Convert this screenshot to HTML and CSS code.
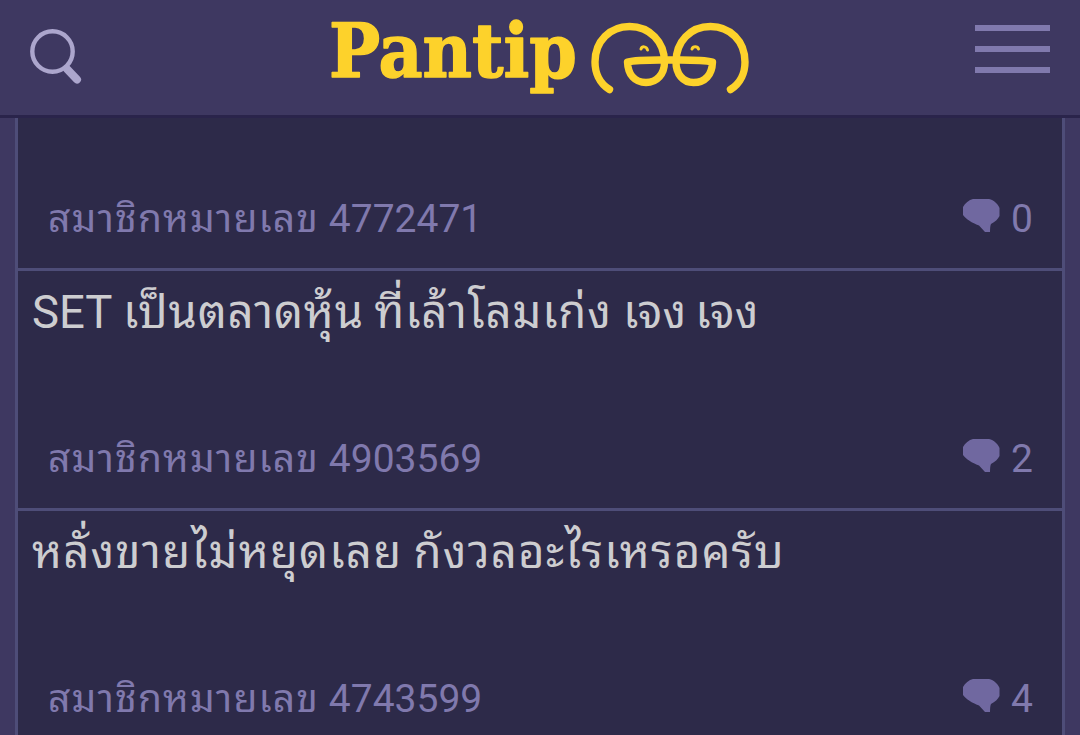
FILE: index.html
```html
<!DOCTYPE html>
<html lang="th">

<head>
    <meta charset="UTF-8">
    <title>Pantip</title>
    <link rel="stylesheet" href="styles.css">
</head>

<body>
    <header class="header">
        <a href="#" class="search">
            <svg width="52" height="56" viewBox="30 28 52 56">
                <circle cx="52.5" cy="51.5" r="20.2" fill="none" stroke="#aca6cd" stroke-width="4.4"/>
                <path d="M67 69L77 79.500" stroke="#aca6cd" stroke-width="8" stroke-linecap="round"/>
            </svg>
        </a>
        <a href="#" class="logo">
            <svg width="422" height="86" viewBox="329 15 422 86">
                <text class="logoText" x="329" y="76.500" textLength="248" lengthAdjust="spacingAndGlyphs">Pantip</text>
                <g fill="none" stroke="#fdd22b" stroke-width="7.4" stroke-linecap="round" stroke-linejoin="round">
                    <path d="M609.5 89.5C599 83 595 72 595 62C595 41 610 26.500 629.500 26.500C650 26.500 664.500 42 664.500 62C664.500 74 657 82.500 646 82.500C635 82.500 628 75 627.500 62C638 59.500 650 60 670 60C690 60 702 59.500 712.500 62C712 75 705 82.500 693.500 82.500C683 82.500 676 74 676 62C676 42 690 26.500 710.500 26.500C730 26.500 745 41 745 62C745 72 741 83 730.500 89.500"/>
                    <path d="M641 49C642 46 646.500 46 647.500 50M692 49C693 46 697.500 46 698.500 49" stroke-width="3"/>
                </g>
            </svg>
        </a>
        <a href="#" class="menu">
            <span></span>
            <span></span>
            <span></span>
        </a>
    </header>
    <div class="wrap">
        <div class="topic">
            <div class="info">
                <span><span class="member">สมาชิกหมายเลข</span> 4772471</span>
                <span class="comment">
                    <svg width="37" height="34" viewBox="0 0 37 34"><path d="M10 0H26C31 1 35 5 36.500 9V17C35 20 32 23 28 25Q27 27 27 33H22L16 26.500C9 24 3 20 0 16V8C2 4 6 1 10 0Z" fill="#7068a0"/></svg>
                    <span>0</span>
                </span>
            </div>
        </div>
        <div class="topic">
            <h3>SET <span class="normal">เป็นตลาดหุ้น ที่เล้าโลมเก่ง</span> <span class="tight">เจง เจง</span></h3>
            <div class="info">
                <span><span class="member">สมาชิกหมายเลข</span> 4903569</span>
                <span class="comment">
                    <svg width="37" height="34" viewBox="0 0 37 34"><path d="M10 0H26C31 1 35 5 36.500 9V17C35 20 32 23 28 25Q27 27 27 33H22L16 26.500C9 24 3 20 0 16V8C2 4 6 1 10 0Z" fill="#7068a0"/></svg>
                    <span>2</span>
                </span>
            </div>
        </div>
        <div class="topic">
            <h3><span class="wide">หลั่งขายไม่หยุดเลย</span> <span class="wide">กังวลอะไรเหรอครับ</span></h3>
            <div class="info">
                <span><span class="member">สมาชิกหมายเลข</span> 4743599</span>
                <span class="comment">
                    <svg width="37" height="34" viewBox="0 0 37 34"><path d="M10 0H26C31 1 35 5 36.500 9V17C35 20 32 23 28 25Q27 27 27 33H22L16 26.500C9 24 3 20 0 16V8C2 4 6 1 10 0Z" fill="#7068a0"/></svg>
                    <span>4</span>
                </span>
            </div>
        </div>
    </div>
</body>
</html>
```

FILE: styles.css
```css
* {
    padding: 0;
    margin: 0;
    box-sizing: border-box;
}

body {
    height: 735px;
    overflow: hidden;
    display: flex;
    flex-direction: column;
    background: #3e3861;
    font-family: Roboto, "Noto Sans Thai Looped", Loma, Garuda, Waree, "Noto Sans Thai", "Noto Sans", sans-serif;
}

.header {
    height: 118px;
    flex-shrink: 0;
    display: flex;
    justify-content: space-between;
    align-items: flex-start;
    padding: 15px 30px 0;
    border-bottom: 3px solid #2a244b;
}

.header svg {
    display: block;
    overflow: visible;
}

.search {
    width: 75px;
    padding-top: 13px;
}

.logoText {
    font-family: "DejaVu Serif", serif;
    font-size: 75px;
    font-weight: bold;
    fill: #fdd22b;
    stroke: #fdd22b;
    stroke-width: 1.5px;
    stroke-linejoin: round;
}

.menu {
    width: 75px;
    padding-top: 10px;
    display: flex;
    flex-direction: column;
    gap: 15px;
}

.menu span {
    height: 6px;
    background: #8079ad;
}

.wrap {
    flex: 1;
    min-height: 0;
    margin: 0 15px;
    border-left: 3px solid #4e4d78;
    border-right: 3px solid #4e4d78;
    background: #2d2a49;
    overflow: hidden;
}

.topic {
    height: 240px;
    display: flex;
    flex-direction: column;
    justify-content: space-between;
    border-bottom: 3px solid #4e4d78;
    padding: 12px 29px 21px 30px;
}

.topic:first-child {
    height: 153px;
    justify-content: flex-end;
}

.topic h3 {
    margin: 0 -16px;
    height: 60px;
    line-height: 60px;
    font-size: 45.5px;
    font-weight: normal;
    white-space: nowrap;
    color: #cdcdd0;
}

.normal {
    letter-spacing: 0.85px;
    word-spacing: -1.5px;
}

.tight {
    letter-spacing: 0.2px;
    word-spacing: -2.5px;
}

.wide {
    letter-spacing: 1.2px;
}

.member {
    letter-spacing: 1.15px;
}

.info {
    display: flex;
    justify-content: space-between;
    height: 56px;
    line-height: 56px;
    font-size: 39px;
    white-space: nowrap;
    color: #8079ad;
}

.comment {
    display: flex;
    gap: 11px;
}

.comment svg {
    margin-top: 8px;
}
```
